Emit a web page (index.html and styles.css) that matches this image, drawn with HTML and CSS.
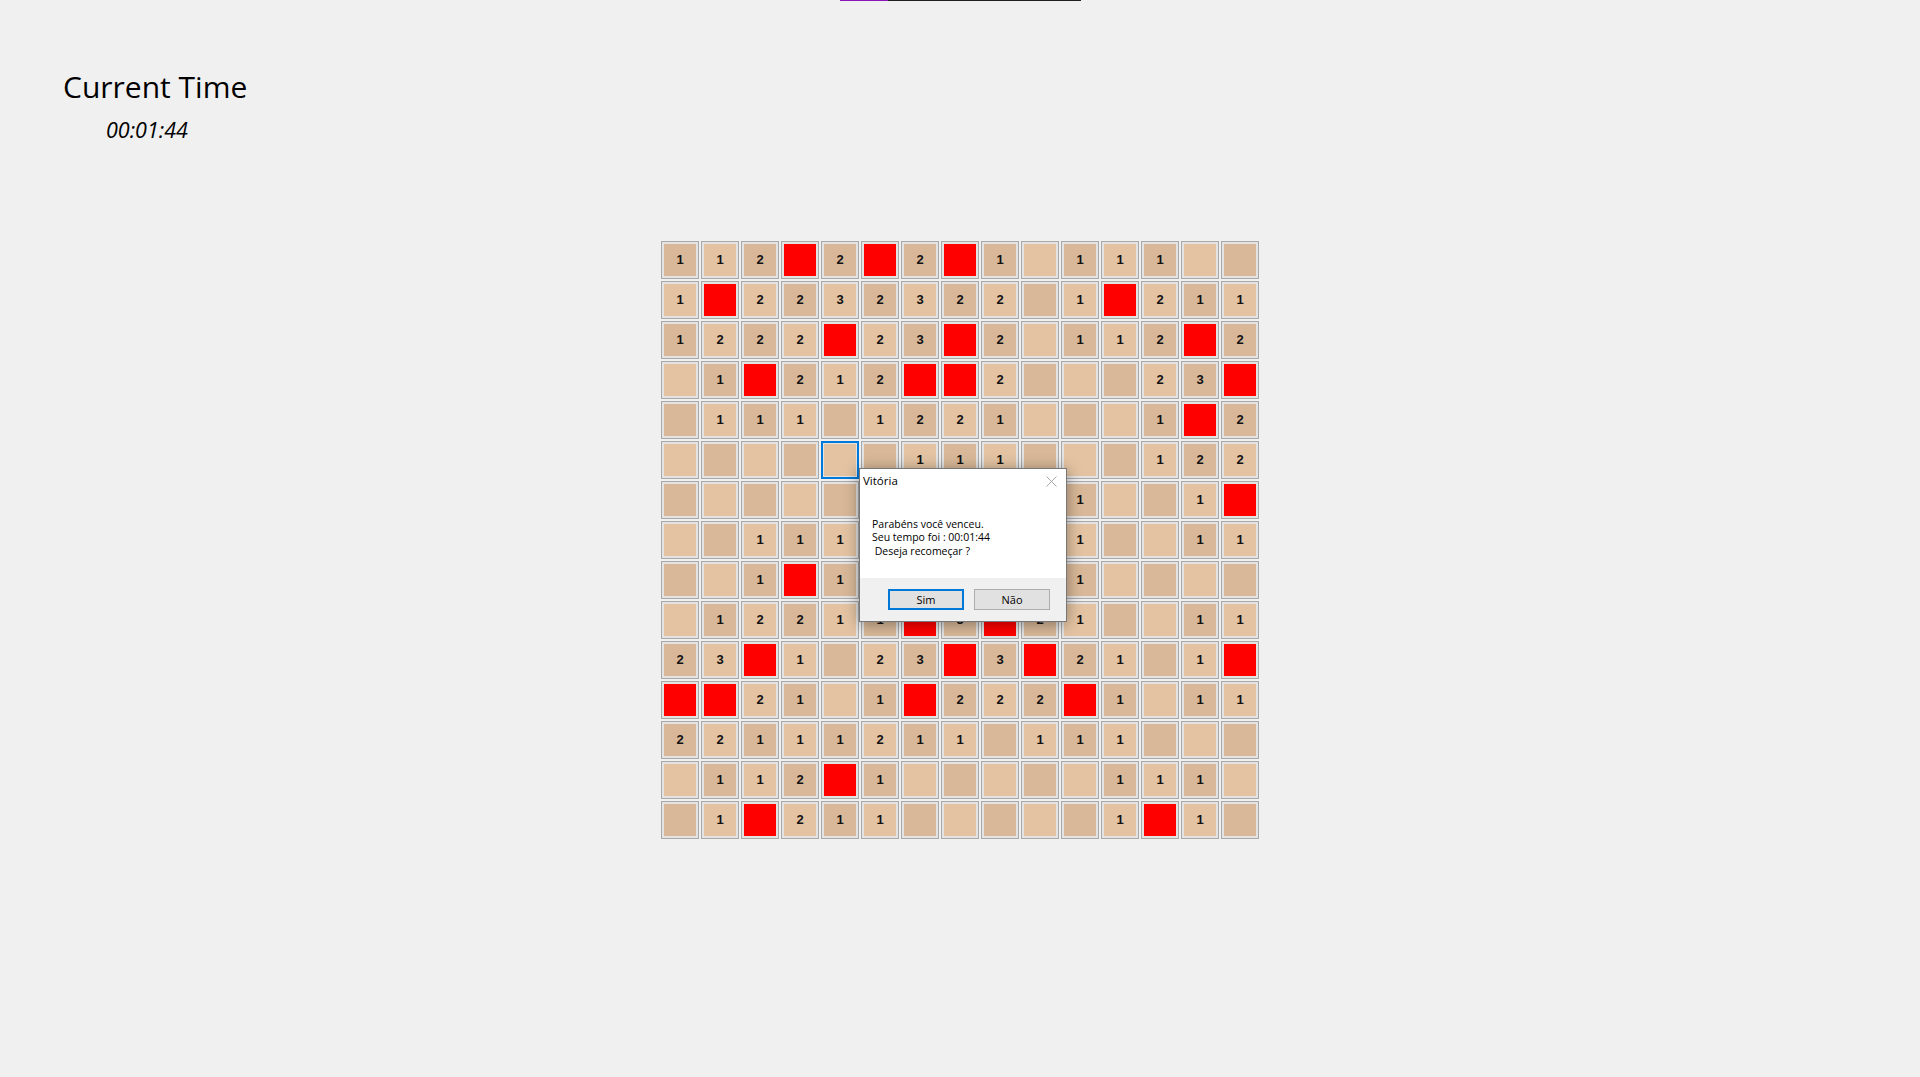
FILE: index.html
```html
<!DOCTYPE html>
<html lang="pt">
<head>
<meta charset="utf-8">
<title>Campo Minado</title>
<link rel="stylesheet" href="styles.css">
</head>
<body>
<div class="topbar"></div>
<header class="header">
  <div class="title">Current Time</div>
  <div class="time">00:01:44</div>
</header>
<main class="board">
  <div class="c d">1</div><div class="c l">1</div><div class="c d">2</div><div class="c m"></div><div class="c d">2</div><div class="c m"></div><div class="c d">2</div><div class="c m"></div><div class="c d">1</div><div class="c l"></div><div class="c d">1</div><div class="c l">1</div><div class="c d">1</div><div class="c l"></div><div class="c d"></div>
  <div class="c l">1</div><div class="c m"></div><div class="c l">2</div><div class="c d">2</div><div class="c l">3</div><div class="c d">2</div><div class="c l">3</div><div class="c d">2</div><div class="c l">2</div><div class="c d"></div><div class="c l">1</div><div class="c m"></div><div class="c l">2</div><div class="c d">1</div><div class="c l">1</div>
  <div class="c d">1</div><div class="c l">2</div><div class="c d">2</div><div class="c l">2</div><div class="c m"></div><div class="c l">2</div><div class="c d">3</div><div class="c m"></div><div class="c d">2</div><div class="c l"></div><div class="c d">1</div><div class="c l">1</div><div class="c d">2</div><div class="c m"></div><div class="c d">2</div>
  <div class="c l"></div><div class="c d">1</div><div class="c m"></div><div class="c d">2</div><div class="c l">1</div><div class="c d">2</div><div class="c m"></div><div class="c m"></div><div class="c l">2</div><div class="c d"></div><div class="c l"></div><div class="c d"></div><div class="c l">2</div><div class="c d">3</div><div class="c m"></div>
  <div class="c d"></div><div class="c l">1</div><div class="c d">1</div><div class="c l">1</div><div class="c d"></div><div class="c l">1</div><div class="c d">2</div><div class="c l">2</div><div class="c d">1</div><div class="c l"></div><div class="c d"></div><div class="c l"></div><div class="c d">1</div><div class="c m"></div><div class="c d">2</div>
  <div class="c l"></div><div class="c d"></div><div class="c l"></div><div class="c d"></div><div class="c l sel"></div><div class="c d"></div><div class="c l">1</div><div class="c d">1</div><div class="c l">1</div><div class="c d"></div><div class="c l"></div><div class="c d"></div><div class="c l">1</div><div class="c d">2</div><div class="c l">2</div>
  <div class="c d"></div><div class="c l"></div><div class="c d"></div><div class="c l"></div><div class="c d"></div><div class="c l"></div><div class="c d"></div><div class="c l"></div><div class="c d"></div><div class="c l"></div><div class="c d">1</div><div class="c l"></div><div class="c d"></div><div class="c l">1</div><div class="c m"></div>
  <div class="c l"></div><div class="c d"></div><div class="c l">1</div><div class="c d">1</div><div class="c l">1</div><div class="c d"></div><div class="c m"></div><div class="c d"></div><div class="c l"></div><div class="c d"></div><div class="c l">1</div><div class="c d"></div><div class="c l"></div><div class="c d">1</div><div class="c l">1</div>
  <div class="c d"></div><div class="c l"></div><div class="c d">1</div><div class="c m"></div><div class="c d">1</div><div class="c l"></div><div class="c d"></div><div class="c l"></div><div class="c d"></div><div class="c l"></div><div class="c d">1</div><div class="c l"></div><div class="c d"></div><div class="c l"></div><div class="c d"></div>
  <div class="c l"></div><div class="c d">1</div><div class="c l">2</div><div class="c d">2</div><div class="c l">1</div><div class="c d">1</div><div class="c m"></div><div class="c d">3</div><div class="c m"></div><div class="c d">2</div><div class="c l">1</div><div class="c d"></div><div class="c l"></div><div class="c d">1</div><div class="c l">1</div>
  <div class="c d">2</div><div class="c l">3</div><div class="c m"></div><div class="c l">1</div><div class="c d"></div><div class="c l">2</div><div class="c d">3</div><div class="c m"></div><div class="c d">3</div><div class="c m"></div><div class="c d">2</div><div class="c l">1</div><div class="c d"></div><div class="c l">1</div><div class="c m"></div>
  <div class="c m"></div><div class="c m"></div><div class="c l">2</div><div class="c d">1</div><div class="c l"></div><div class="c d">1</div><div class="c m"></div><div class="c d">2</div><div class="c l">2</div><div class="c d">2</div><div class="c m"></div><div class="c d">1</div><div class="c l"></div><div class="c d">1</div><div class="c l">1</div>
  <div class="c d">2</div><div class="c l">2</div><div class="c d">1</div><div class="c l">1</div><div class="c d">1</div><div class="c l">2</div><div class="c d">1</div><div class="c l">1</div><div class="c d"></div><div class="c l">1</div><div class="c d">1</div><div class="c l">1</div><div class="c d"></div><div class="c l"></div><div class="c d"></div>
  <div class="c l"></div><div class="c d">1</div><div class="c l">1</div><div class="c d">2</div><div class="c m"></div><div class="c d">1</div><div class="c l"></div><div class="c d"></div><div class="c l"></div><div class="c d"></div><div class="c l"></div><div class="c d">1</div><div class="c l">1</div><div class="c d">1</div><div class="c l"></div>
  <div class="c d"></div><div class="c l">1</div><div class="c m"></div><div class="c l">2</div><div class="c d">1</div><div class="c l">1</div><div class="c d"></div><div class="c l"></div><div class="c d"></div><div class="c l"></div><div class="c d"></div><div class="c l">1</div><div class="c m"></div><div class="c l">1</div><div class="c d"></div>
</main>
<div class="dialog" role="dialog">
  <div class="dlg-title">
    <span>Vitória</span>
    <svg class="dlg-close" width="11" height="11" viewBox="0 0 11 11"><path d="M0.5 0.5 L10.5 10.5 M10.5 0.5 L0.5 10.5" stroke="#a8a8a8" stroke-width="1" fill="none"/></svg>
  </div>
  <div class="dlg-body">
    <div>Parabéns você venceu.</div>
    <div>Seu tempo foi : 00:01:44</div>
    <div class="pre"> Deseja recomeçar ?</div>
  </div>
  <div class="dlg-foot">
    <button class="btn btn-default">Sim</button>
    <button class="btn">Não</button>
  </div>
</div>
</body>
</html>
```

FILE: styles.css
```css
html, body {
  margin: 0;
  padding: 0;
}
body {
  background: #f0f0f0;
  width: 1920px;
  height: 1077px;
  overflow: hidden;
  position: relative;
  font-family: "Open Sans", "Noto Sans", sans-serif;
  color: #000;
}
.topbar {
  position: absolute;
  top: 0;
  left: 840px;
  width: 241px;
  height: 1px;
  background: linear-gradient(to right, #8b17b8 0, #8b17b8 48px, #1e1e1e 48px);
}
.header {
  padding: 68px 0 0 63px;
}
.title {
  font-size: 30px;
  line-height: 37px;
}
.time {
  font-size: 21.5px;
  font-style: italic;
  line-height: 26px;
  margin-top: 12px;
  padding-left: 43px;
}
.board {
  margin: 98px auto 0;
  width: 598px;
  display: grid;
  grid-template-columns: repeat(15, 38px);
  grid-auto-rows: 38px;
  gap: 2px;
}
.c {
  box-sizing: border-box;
  border: 1px solid #a9a9a9;
  box-shadow: inset 0 0 0 2px #e3e3e3;
  display: flex;
  align-items: center;
  justify-content: center;
  padding-bottom: 2px;
  font-family: "Liberation Sans", Arial, sans-serif;
  font-weight: bold;
  font-size: 13px;
  color: #111;
}
.d { background: #d8b898; }
.l { background: #e3c3a2; }
.m { background: #ff0000; }
.sel {
  border: 2px solid #0078d7;
  box-shadow: inset 0 0 0 1px #e3e3e3;
}
.dialog {
  position: absolute;
  left: 859px;
  top: 468px;
  width: 208px;
  height: 154px;
  box-sizing: border-box;
  border: 1px solid #777777;
  background: #ffffff;
  box-shadow: 0 2px 14px rgba(0, 0, 0, 0.38);
  display: flex;
  flex-direction: column;
  font-family: "Open Sans", "Noto Sans", sans-serif;
}
.dlg-title {
  height: 30px;
  box-sizing: border-box;
  padding: 4px 9px 0 3px;
  display: flex;
  justify-content: space-between;
  align-items: flex-start;
  font-size: 11.5px;
  line-height: 15px;
}
.dlg-close {
  margin-top: 3px;
}
.dlg-body {
  height: 79px;
  box-sizing: border-box;
  padding: 19px 0 0 12px;
  font-size: 10.5px;
  line-height: 13.3px;
}
.pre {
  white-space: pre;
}
.dlg-foot {
  flex: 1;
  background: #f0f0f0;
  display: flex;
  justify-content: flex-end;
  align-items: flex-start;
  gap: 10px;
  padding: 11px 16px 0 0;
}
.btn {
  width: 76px;
  height: 21px;
  box-sizing: border-box;
  margin: 0;
  padding: 0;
  border: 1px solid #adadad;
  background: #e1e1e1;
  font-family: "Open Sans", "Noto Sans", sans-serif;
  font-size: 11px;
  line-height: 17px;
  color: #000;
}
.btn-default {
  border: 2px solid #0078d7;
  line-height: 15px;
}
```
